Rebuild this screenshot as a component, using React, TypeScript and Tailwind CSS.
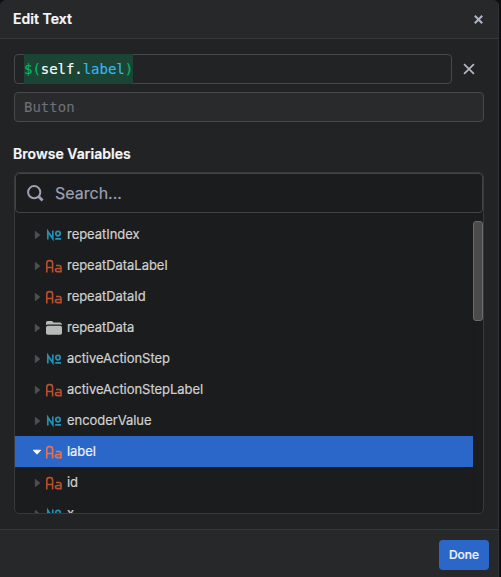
type Kind = "number" | "text" | "folder";

interface Variable {
  name: string;
  kind: Kind;
  selected?: boolean;
}

const variables: Variable[] = [
  { name: "repeatIndex", kind: "number" },
  { name: "repeatDataLabel", kind: "text" },
  { name: "repeatDataId", kind: "text" },
  { name: "repeatData", kind: "folder" },
  { name: "activeActionStep", kind: "number" },
  { name: "activeActionStepLabel", kind: "text" },
  { name: "encoderValue", kind: "number" },
  { name: "label", kind: "text", selected: true },
  { name: "id", kind: "text" },
  { name: "x", kind: "number" },
];

function KindIcon({ kind, selected }: { kind: Kind; selected?: boolean }) {
  if (kind === "folder") {
    return (
      <svg className="h-4 w-4 shrink-0" viewBox="0 0 16 16" fill="#b8bab9">
        <path d="M0 5.1V2.7Q0 1 1.7 1H5.4Q6.3 1 6.9 1.7L7.7 2.5H14.2Q15.8 2.5 16 5.1Q15.2 4.6 14.2 4.6H1.8Q.8 4.6 0 5.1Z" />
        <rect y="5.7" width="16" height="9.1" rx="1.8" />
      </svg>
    );
  }
  if (kind === "number") {
    return (
      <svg className="h-4 w-4 shrink-0" viewBox="0 0 16 16" fill="none" stroke="#2590b5" strokeWidth="1.7">
        <path d="M1.8 12.5V4.4L6.8 11.8V3.6" />
        <ellipse cx="12" cy="6.6" rx="2.2" ry="2.3" />
        <path d="M9.2 11.9H15" />
      </svg>
    );
  }
  return (
    <svg
      className={"h-4 w-4 shrink-0 " + (selected ? "text-[#f16f43]" : "text-[#b85030]")}
      viewBox="0 0 16 16"
      fill="none"
      stroke="currentColor"
      strokeWidth="1.6"
    >
      <path d="M.8 14.5V5.2Q.8 2.6 3.2 2.6H4.2Q6.6 2.6 6.6 5.2V14.5M.8 9.5H6.6" />
      <path d="M10 7.5H13.2Q15 7.5 15 9.3V13.6H11.4Q9.5 13.6 9.5 12.1Q9.5 10.5 11.4 10.5H15" />
    </svg>
  );
}

function Cross({ className }: { className: string }) {
  return (
    <svg className={className} viewBox="0 0 10 10" fill="none" stroke="currentColor">
      <path d="M.9 .9L9.1 9.1M9.1 .9L.9 9.1" />
    </svg>
  );
}

function Row({ name, kind, selected }: Variable) {
  return (
    <div
      className={
        "flex h-[31px] shrink-0 items-center pl-[17px] " +
        (selected ? "bg-[#2b67c9] text-[#f0f3fa]" : "text-[#d0d1d1]")
      }
    >
      <svg className="mr-[4px] h-[10px] w-[10px] shrink-0" viewBox="0 0 10 10">
        {selected ? (
          <path d="M1.2 3.2H8.8L5 7.2Z" fill="#fff" stroke="#fff" strokeWidth=".8" strokeLinejoin="round" />
        ) : (
          <path d="M3.3 1.3V8.7L7.8 5Z" fill="#505152" stroke="#505152" strokeWidth=".8" strokeLinejoin="round" />
        )}
      </svg>
      <KindIcon kind={kind} selected={selected} />
      <span className="mb-[2px] ml-[5px] text-[13px] leading-[18px] tracking-[-0.04px] [-webkit-text-stroke:0.2px_currentColor]">
        {name}
      </span>
    </div>
  );
}

export default function App() {
  return (
    <div className="h-[577px] w-[501px] bg-[#0d0e10] font-['Inter',sans-serif]">
      <div className="flex h-full w-[499px] flex-col overflow-hidden rounded-t-[6px] border-r border-[#303235] bg-[#222325]">
        <header className="flex h-[39px] shrink-0 items-center justify-between border-b border-[#36383a] bg-[#27282a] pr-[15px] pl-[13px]">
          <h1 className="text-[14px] leading-5 font-semibold tracking-[0.03px] text-[#f7f7f8] [-webkit-text-stroke:0.2px_currentColor]">
            Edit Text
          </h1>
          <Cross className="h-[9px] w-[9px] stroke-[2.3] text-[#aeb4c3]" />
        </header>

        <main className="flex h-[490px] shrink-0 flex-col px-[14px] pt-[15px]">
          <div className="flex items-center">
            <div className="flex h-[30px] w-[438px] items-center rounded-[4px] border border-[#47494b] pl-[9px]">
              <span className="-my-px flex h-[30px] items-center bg-[#1b4435] font-['DejaVu_Sans_Mono',monospace] text-[14px] tracking-[-0.04px] whitespace-pre text-[#09b66b] [-webkit-text-stroke:0.15px_currentColor]">
                $(<span className="text-white">self.</span>
                <span className="text-[#38b6ef]">label</span>)
              </span>
            </div>
            <Cross className="ml-[11px] h-[12px] w-[12px] stroke-[1.5] text-[#aeb4c3]" />
          </div>
          <div className="mt-[8px] flex h-[30px] shrink-0 items-center rounded-[4px] border border-[#47494b] bg-[#292a2c] pl-[9px] font-['DejaVu_Sans_Mono',monospace] text-[14px] text-[#6c707a] [-webkit-text-stroke:0.1px_currentColor]">
            Button
          </div>
          <h2 className="mt-[22px] -ml-px text-[14px] leading-5 font-semibold tracking-[0.03px] text-[#f7f7f8] [-webkit-text-stroke:0.2px_currentColor]">
            Browse Variables
          </h2>

          <section className="mt-[8px] flex h-[342px] shrink-0 flex-col overflow-hidden rounded-[5px] border border-[#37393b] bg-[#1b1c1d]">
            <div className="flex h-[40px] shrink-0 items-center rounded-[4px] border border-[#424446] pl-[11px] text-[#9ba1b2]">
              <svg className="h-[17px] w-[17px]" viewBox="0 0 17 17" fill="none" stroke="currentColor">
                <circle cx="7.2" cy="7.2" r="6.1" strokeWidth="2" />
                <path d="M11.6 11.6L15.6 15.6" strokeWidth="2.8" />
              </svg>
              <span className="ml-[11px] text-[16px] leading-6 [-webkit-text-stroke:0.2px_currentColor]">Search...</span>
            </div>
            <div className="flex min-h-0 flex-1">
              <div className="flex w-[458px] flex-col overflow-hidden pt-[6px]">
                {variables.map((variable) => (
                  <Row key={variable.name} {...variable} />
                ))}
              </div>
              <div className="flex-1 border-l border-[#191a1b] pt-[8px]">
                <div className="-ml-px h-[100px] w-[10px] rounded-[3px] border border-[#6b6b6b] bg-[#4b4b4b]" />
              </div>
            </div>
          </section>
        </main>

        <footer className="flex min-h-0 flex-1 items-start justify-end border-t border-[#36383a] bg-[#27282a] pt-[10px] pr-[9px]">
          <button className="h-[30px] w-[50px] rounded-[4px] bg-[#2b67c9] pb-px text-[12px] font-medium text-[#f0f3fa] [-webkit-text-stroke:0.2px_currentColor]">
            Done
          </button>
        </footer>
      </div>
    </div>
  );
}
